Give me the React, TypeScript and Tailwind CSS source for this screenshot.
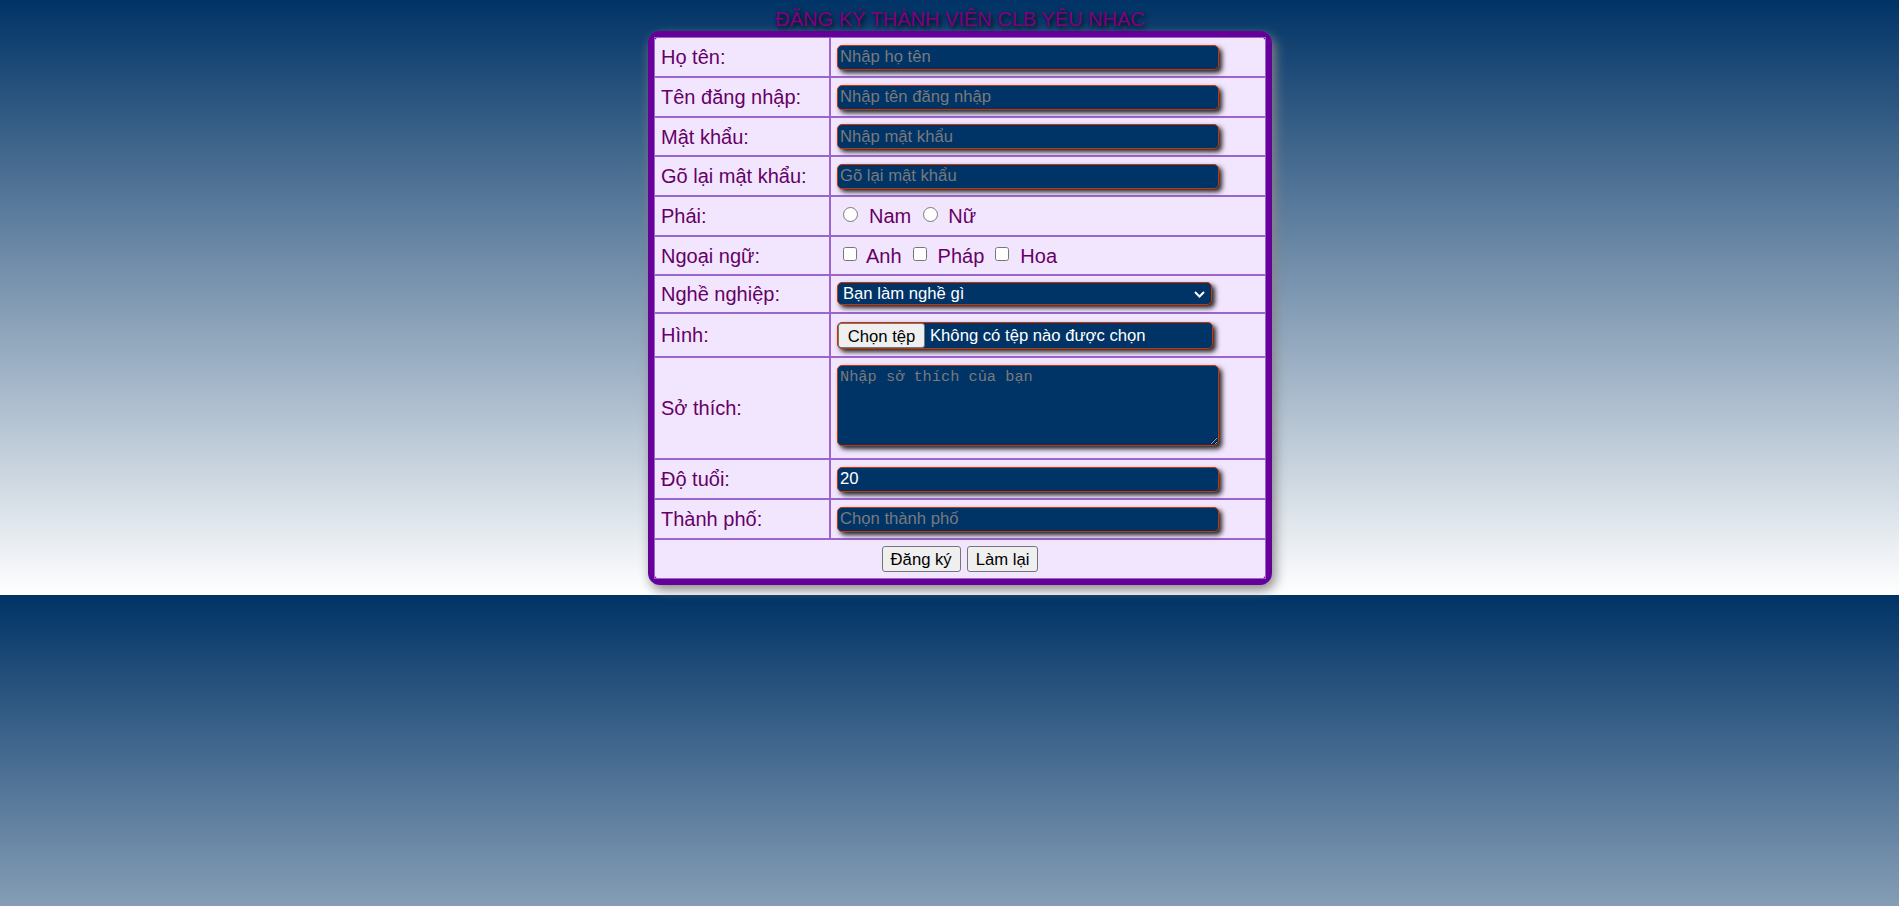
import React from 'react';

const field =
  "h-[25px] w-[382px] rounded-[5px] border border-[#cc3300] bg-[#003366] px-[2px] text-[16.67px] text-white placeholder:text-[#7a7a7a] shadow-[3px_3px_5px_#222] outline-none";

function Row({ label, h, children }: { label: string; h: string; children: React.ReactNode }) {
  return (
    <div className={`flex ${h}`}>
      <div className="flex w-[176px] shrink-0 items-center border border-[#9966cc] pl-[6px] text-[20px] text-[#660066]">
        {label}
      </div>
      <div className="flex flex-1 items-center border border-[#9966cc] pl-[6px]">{children}</div>
    </div>
  );
}

export default function App() {
  return (
    <div className="min-h-screen w-full bg-[linear-gradient(to_bottom,#003366,#ffffff)] bg-[length:100%_595px] bg-repeat pt-[8px] pl-[21px] font-['Liberation_Sans',Arial,sans-serif]">
      <div className="mx-auto w-[624px]">
        {/* Heading */}
        <h2 className="h-[23px] text-center text-[20px] leading-[23px] text-[#800080] [text-shadow:2px_2px_5px_#000]">
          ĐĂNG KÝ THÀNH VIÊN CLB YÊU NHẠC
        </h2>

        {/* Form table */}
        <div className="rounded-[12px] border-[6px] border-[#660099] bg-[#f2e6ff] shadow-[3px_5px_12px_#888]">
          <Row label="Họ tên:" h="h-[40px]">
            <input className={field} placeholder="Nhập họ tên" />
          </Row>
          <Row label="Tên đăng nhập:" h="h-[40px]">
            <input className={field} placeholder="Nhập tên đăng nhập" />
          </Row>
          <Row label="Mật khẩu:" h="h-[39px]">
            <input type="password" className={field} placeholder="Nhập mật khẩu" />
          </Row>
          <Row label="Gõ lại mật khẩu:" h="h-[40px]">
            <input type="password" className={field} placeholder="Gõ lại mật khẩu" />
          </Row>
          <Row label="Phái:" h="h-[40px]">
            <div className="flex items-center text-[20px] text-[#660066]">
              <input type="radio" name="phai" className="mb-[3px] ml-[6px] mr-[11px] h-[15px] w-[15px]" />
              <span>Nam</span>
              <input type="radio" name="phai" className="mb-[3px] ml-[12px] mr-[10px] h-[15px] w-[15px]" />
              <span>Nữ</span>
            </div>
          </Row>
          <Row label="Ngoại ngữ:" h="h-[39px]">
            <div className="flex items-center text-[20px] text-[#660066]">
              <input type="checkbox" className="mb-[4px] ml-[6px] mr-[9px] h-[14px] w-[14px]" />
              <span>Anh</span>
              <input type="checkbox" className="mb-[4px] ml-[11px] mr-[11px] h-[14px] w-[14px]" />
              <span>Pháp</span>
              <input type="checkbox" className="mb-[4px] ml-[11px] mr-[11px] h-[14px] w-[14px]" />
              <span>Hoa</span>
            </div>
          </Row>
          <Row label="Nghề nghiệp:" h="h-[38px]">
            <div className="relative">
              <select className="h-[23px] w-[375px] appearance-none rounded-[5px] border border-[#cc3300] bg-[#003366] pl-[5px] text-[16.67px] leading-[19px] text-white shadow-[3px_3px_5px_#222] outline-none">
                <option>Bạn làm nghề gì</option>
              </select>
              <svg
                className="pointer-events-none absolute right-[7px] top-[9px]"
                width="11"
                height="7"
                viewBox="0 0 11 7"
                fill="none"
              >
                <polyline points="1,1 5.5,5.5 10,1" stroke="#ffffff" strokeWidth="2" />
              </svg>
            </div>
          </Row>
          <Row label="Hình:" h="h-[44px]">
            <div className="flex h-[27px] w-[376px] items-center overflow-hidden rounded-[5px] border border-[#cc3300] bg-[#003366] text-[16.67px] shadow-[3px_3px_5px_#222]">
              <button className="h-full w-[87px] rounded-[3px] border border-[#767676] bg-[#efefef] text-black">
                Chọn tệp
              </button>
              <span className="ml-[5px] text-white">Không có tệp nào được chọn</span>
            </div>
          </Row>
          <Row label="Sở thích:" h="h-[102px]">
            <textarea
              className="mt-[-6px] h-[81px] w-[382px] resize rounded-[5px] border border-[#cc3300] bg-[#003366] px-[2px] py-[2px] font-['Liberation_Mono',monospace] text-[15.3px] leading-[18px] text-white placeholder:text-[#7a7a7a] shadow-[3px_3px_5px_#222] outline-none"
              placeholder="Nhập sở thích của bạn"
            />
          </Row>
          <Row label="Độ tuổi:" h="h-[40px]">
            <input className={field} defaultValue="20" />
          </Row>
          <Row label="Thành phố:" h="h-[40px]">
            <input className={field} placeholder="Chọn thành phố" />
          </Row>

          {/* Buttons */}
          <div className="flex h-[40px] items-center justify-center gap-[6px] border border-[#9966cc]">
            <button className="h-[26px] rounded-[3px] border border-[#767676] bg-[#efefef] px-[8px] text-[16.67px] text-black">
              Đăng ký
            </button>
            <button className="h-[26px] rounded-[3px] border border-[#767676] bg-[#efefef] px-[8px] text-[16.67px] text-black">
              Làm lại
            </button>
          </div>
        </div>
      </div>
    </div>
  );
}
